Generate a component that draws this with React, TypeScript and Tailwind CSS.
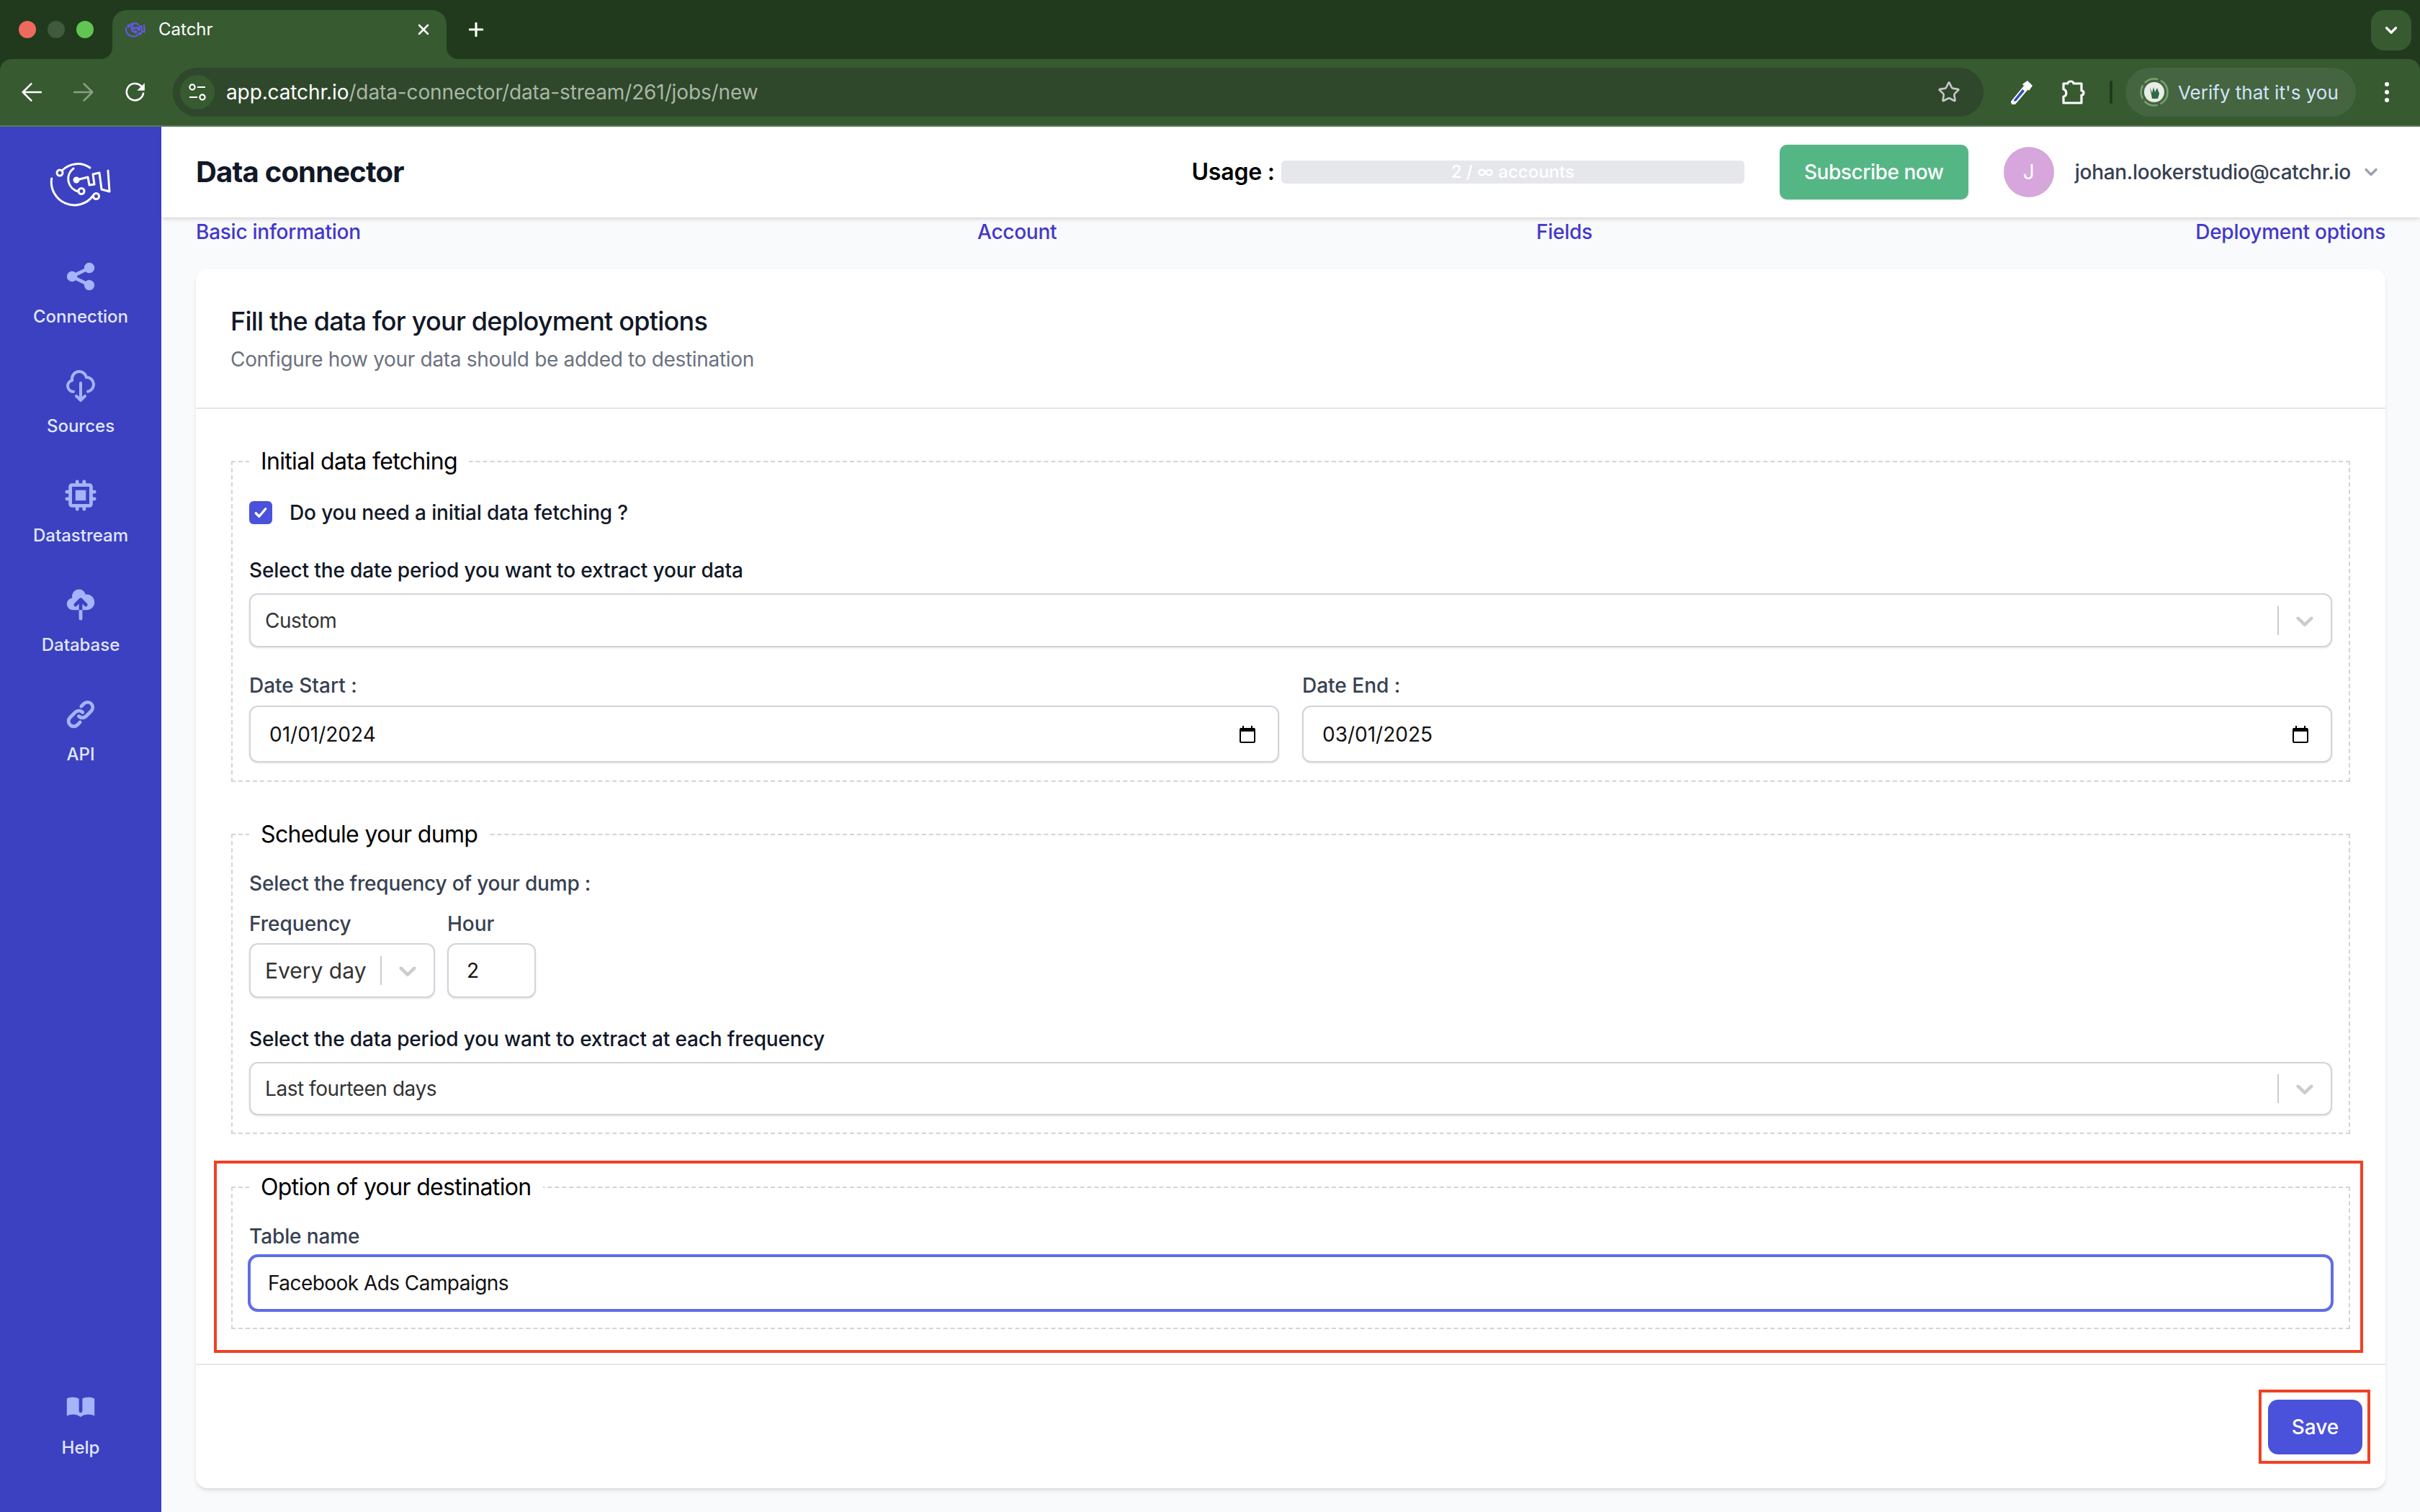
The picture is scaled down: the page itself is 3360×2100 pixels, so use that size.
import React from "react";
import { HiShare, HiOutlineCloudDownload, HiChip, HiCloudUpload, HiLink, HiBookOpen } from "react-icons/hi";
import { X, Plus, ChevronDown, Star } from "lucide-react";

function Logo({ color, className, sw = 3 }: { color: string; className: string; sw?: number }) {
  return (
    <svg viewBox="0 0 125 100" className={className} fill="none" stroke={color} strokeWidth={sw} strokeLinecap="round" strokeLinejoin="round">
      <path d="M21.7 43 A32 32 0 0 0 79 67" />
      <circle cx="83.5" cy="67.5" r="4" />
      <path d="M37 31 A30 30 0 0 1 75 28" />
      <circle cx="33" cy="35" r="4" />
      <path d="M52 29 A18 18 0 0 0 59 61" />
      <circle cx="63" cy="60.5" r="4" />
      <path d="M56 45 L72 41 L74 52 L81 51 L79 37 L88 35 L91 58 L102 61 L100 32" />
      <circle cx="56" cy="45" r="3" fill={color} />
    </svg>
  );
}

function NavItem({ icon, label }: { icon: React.ReactNode; label: string }) {
  return (
    <div className="flex flex-col items-center h-[152px]">
      <div className="h-[48px] w-[48px] text-[#a5b4fc] flex items-center justify-center">{icon}</div>
      <div className="mt-[16px] text-[24px] leading-[32px] font-medium text-[#e0e7ff]">{label}</div>
    </div>
  );
}

function Flare({ side }: { side: "l" | "r" }) {
  return side === "l" ? (
    <svg viewBox="0 0 16 16" className="absolute bottom-0 -left-[16px] w-[16px] h-[16px]">
      <path d="M16 0 V16 H0 A16 16 0 0 0 16 0Z" fill="#375a31" />
    </svg>
  ) : (
    <svg viewBox="0 0 16 16" className="absolute bottom-0 -right-[16px] w-[16px] h-[16px]">
      <path d="M0 0 V16 H16 A16 16 0 0 1 0 0Z" fill="#375a31" />
    </svg>
  );
}

function Select({ value, h, big }: { value: string; h: string; big?: boolean }) {
  return (
    <div className={`flex items-center w-full bg-white border-2 border-[#d1d5db] rounded-[12px] shadow-sm ${h}`}>
      <div className={`flex-1 pl-[20px] text-[#333333] ${big ? "text-[30px]" : "text-[28px] tracking-[-0.45px]"}`}>{value}</div>
      <div className="w-[2px] h-[40px] bg-[#cccccc]" />
      <div className="flex justify-center w-[72px]">
        <svg viewBox="0 0 20 20" className="w-[40px] h-[40px]" fill="#cccccc">
          <path d="M4.516 7.548c.436-.446 1.043-.481 1.576 0L10 11.295l3.908-3.747c.533-.481 1.141-.446 1.574 0 .436.445.408 1.197 0 1.615-.406.418-4.695 4.502-4.695 4.502a1.095 1.095 0 0 1-1.576 0S4.924 9.581 4.516 9.163s-.436-1.17 0-1.615z" />
        </svg>
      </div>
    </div>
  );
}

function CalendarIcon() {
  return (
    <svg viewBox="0 0 22 24" className="w-[22px] h-[24px] shrink-0" fill="none">
      <rect x="1" y="4" width="20" height="19" rx="1.5" stroke="#000" strokeWidth="2" />
      <rect x="1" y="3" width="20" height="5" fill="#000" />
      <rect x="4" y="0" width="2" height="4" fill="#000" />
      <rect x="16" y="0" width="2" height="4" fill="#000" />
    </svg>
  );
}

function DateField({ label, value }: { label: string; value: string }) {
  return (
    <div>
      <div className="text-[28px] leading-[40px] font-medium text-[#374151]">{label}</div>
      <div className="mt-[8px] h-[79px] flex items-center pl-[26px] pr-[31px] bg-white border-2 border-[#d1d5db] rounded-[12px] shadow-sm">
        <input readOnly value={value} className="flex-1 min-w-0 bg-transparent outline-none text-[28px] text-[#111111]" />
        <CalendarIcon />
      </div>
    </div>
  );
}

function Section({ title, className, children }: { title: string; className: string; children: React.ReactNode }) {
  return (
    <fieldset className={`border-2 border-dashed border-[#d1d5db] pl-[23px] pr-[23px] ${className}`}>
      <legend className="px-[16px] text-[32px] leading-[48px] tracking-[-0.65px] text-[#000000]">{title}</legend>
      {children}
    </fieldset>
  );
}

export default function App() {
  return (
    <div className="relative w-[3360px] h-[2100px] overflow-hidden flex flex-col bg-[#f9fafb] font-['Inter',sans-serif]">
      {/* Browser chrome */}
      <div className="h-[176px] shrink-0 bg-[#213a1d] flex flex-col">
        <div className="h-[82px] flex items-end">
          <div className="self-start mt-[29px] ml-[26px] flex gap-[16px]">
            <div className="w-[24px] h-[24px] rounded-full bg-[#ee6a5f]" />
            <div className="w-[24px] h-[24px] rounded-full bg-[#3f5a3d]" />
            <div className="w-[24px] h-[24px] rounded-full bg-[#61c554]" />
          </div>
          <div className="relative ml-[26px] w-[464px] h-[68px] bg-[#375a31] rounded-t-[20px] flex items-center pl-[12px] pr-[20px] pb-[14px]">
            <Flare side="l" />
            <Flare side="r" />
            <Logo color="#6358e6" sw={7} className="w-[40px] h-[32px] shrink-0" />
            <span className="ml-[12px] text-[24px] text-white flex-1">Catchr</span>
            <X className="w-[24px] h-[24px] text-white" strokeWidth={2.5} />
          </div>
          <Plus className="self-start mt-[26px] ml-[26px] w-[30px] h-[30px] text-white" strokeWidth={2.5} />
          <div className="self-start mt-[14px] ml-auto mr-[12px] w-[56px] h-[56px] rounded-[18px] bg-[#375a31] flex items-center justify-center">
            <ChevronDown className="w-[26px] h-[26px] text-white" strokeWidth={3} />
          </div>
        </div>
        <div className="h-[94px] bg-[#375a31] border-b-2 border-[#5c7a56] rounded-t-[16px] flex items-center">
          <svg viewBox="0 0 24 24" className="ml-[30px] w-[28px] h-[28px]" fill="none" stroke="#fff" strokeWidth="2.2" strokeLinecap="round" strokeLinejoin="round">
            <path d="M23 12H1.5M11.5 2 1.5 12l10 10" />
          </svg>
          <svg viewBox="0 0 24 24" className="ml-[44px] w-[28px] h-[28px]" fill="none" stroke="#8aa085" strokeWidth="2.2" strokeLinecap="round" strokeLinejoin="round">
            <path d="M1 12h21.5M12.5 2l10 10-10 10" />
          </svg>
          <svg viewBox="0 0 24 24" className="ml-[44px] w-[28px] h-[28px]" fill="none" stroke="#fff" strokeWidth="2.2">
            <path d="M21.5 12.5A10 10 0 1 1 18.5 4.5L22 8" />
            <path d="M23 1 23 10 14 10 Z" fill="#fff" stroke="none" />
          </svg>
          <div className="ml-[38px] w-[2514px] h-[68px] rounded-full bg-[#2f472b] flex items-center pl-[10px] pr-[32px]">
            <div className="w-[48px] h-[48px] rounded-full bg-[#375a31] flex items-center justify-center">
              <svg viewBox="0 0 26 26" className="w-[26px] h-[26px]" fill="none" stroke="#fff" strokeWidth="2.2">
                <circle cx="6" cy="6" r="3.6" />
                <path d="M13 6h11M2 20h11" />
                <circle cx="20" cy="20" r="3.6" />
              </svg>
            </div>
            <div className="ml-[16px] text-[28px] tracking-[-0.12px] flex-1 whitespace-nowrap text-[#a9b7a6]">
              <span className="text-white">app.catchr.io</span>/data-connector/data-stream/261/jobs/new
            </div>
            <Star className="w-[32px] h-[32px] text-[#c4c7c5]" strokeWidth={2} />
          </div>
          <svg viewBox="0 0 36 36" className="ml-[34px] w-[36px] h-[36px]">
            <path d="M4 31 22 9l6 5-18 21H5z" fill="#fff" />
            <path d="M8 29 20 14l3 2.5-12 14-3 0z" fill="#2f4fb5" />
            <path d="M20 7l7-5 7 7-5 7z" fill="#fff" />
          </svg>
          <svg viewBox="0 0 34 36" className="ml-[37px] w-[34px] h-[36px]" fill="none" stroke="#fff" strokeWidth="3.2" strokeLinejoin="round">
            <path d="M4 6h6c0-4 8-4 8 0h11v10c4 0 4 6 0 6v11H4v-9c5 0 5-9 0-10z" />
          </svg>
          <div className="ml-[34px] w-[4px] h-[32px] rounded-full bg-[#1f3a1b]" />
          <div className="ml-[18px] w-[320px] h-[68px] rounded-full bg-[#44653f] flex items-center pl-[20px]">
            <svg viewBox="0 0 40 40" className="w-[40px] h-[40px] shrink-0">
              <circle cx="20" cy="20" r="18.5" fill="none" stroke="#79a173" strokeWidth="2.5" strokeDasharray="20 4" />
              <circle cx="20" cy="20" r="14" fill="#e9ece7" />
              <path d="M14 13l3 8 2-8 2 7 3-6 3 8-2 7h-8z" fill="#2f6a45" />
            </svg>
            <span className="ml-[13px] text-[26px] whitespace-nowrap text-[#d3e3fd]">Verify that it's you</span>
          </div>
          <div className="ml-[40px] flex flex-col gap-[5px]">
            <div className="w-[6px] h-[6px] rounded-full bg-white" />
            <div className="w-[6px] h-[6px] rounded-full bg-white" />
            <div className="w-[6px] h-[6px] rounded-full bg-white" />
          </div>
        </div>
      </div>

      <div className="flex-1 flex min-h-0">
        {/* Sidebar */}
        <aside className="w-[224px] shrink-0 bg-[#3c41c1] flex flex-col items-center">
          <Logo color="#ffffff" className="mt-[29px] w-[125px] h-[100px]" />
          <div className="mt-[55px] flex flex-col">
            <NavItem icon={<HiShare className="w-[48px] h-[48px]" />} label="Connection" />
            <NavItem icon={<HiOutlineCloudDownload className="w-[48px] h-[48px]" />} label="Sources" />
            <NavItem icon={<HiChip className="w-[48px] h-[48px]" />} label="Datastream" />
            <NavItem icon={<HiCloudUpload className="w-[48px] h-[48px]" />} label="Database" />
            <NavItem icon={<HiLink className="w-[48px] h-[48px]" />} label="API" />
          </div>
          <div className="mt-auto mb-[17px]">
            <NavItem icon={<HiBookOpen className="w-[48px] h-[48px]" />} label="Help" />
          </div>
        </aside>

        <main className="flex-1 min-w-0 flex flex-col">
          {/* Header */}
          <header className="relative h-[126px] shrink-0 bg-white shadow-md flex items-center pl-[48px]">
            <h1 className="text-[40px] font-bold tracking-[-0.8px] text-[#111827]">Data connector</h1>
            <div className="ml-auto text-[32px] font-semibold tracking-[-0.2px] text-[#000000]">Usage :</div>
            <div className="ml-[9px] w-[643px] h-[32px] rounded-[6px] bg-[#e5e7eb] flex items-center justify-center text-[24px] font-medium text-white">
              2 / ∞ accounts
            </div>
            <button className="ml-[49px] w-[262px] h-[76px] rounded-[10px] bg-[#55b685] shadow-sm text-white text-[28px] tracking-[-0.45px] font-medium">
              Subscribe now
            </button>
            <div className="ml-[49px] w-[70px] h-[70px] rounded-full bg-[#d6a6dc] flex items-center justify-center text-[28px] text-white">J</div>
            <div className="ml-[29px] text-[28px] tracking-[-0.3px] font-medium text-[#374151]">johan.lookerstudio@catchr.io</div>
            <ChevronDown className="ml-[14px] mr-[54px] w-[28px] h-[28px] text-[#9ca3af]" strokeWidth={3} />
          </header>

          <div className="flex-1 min-h-0 px-[48px]">
            {/* Steps */}
            <div className="h-[72px] flex text-[28px] leading-[40px] font-medium tracking-[-0.25px] text-[#4338ca]">
              <div className="w-[1085px]">Basic information</div>
              <div className="w-[776px]">Account</div>
              <div className="flex-1">Fields</div>
              <div>Deployment options</div>
            </div>

            {/* Card */}
            <div className="h-[1693px] bg-white rounded-[16px] shadow-md flex flex-col">
              <div className="h-[194px] shrink-0 border-b-2 border-[#e5e7eb] px-[48px] pt-[44px]">
                <h2 className="text-[36px] leading-[56px] font-medium tracking-[-0.78px] text-[#111827]">Fill the data for your deployment options</h2>
                <p className="mt-[5px] text-[28px] leading-[40px] tracking-[-0.31px] text-[#6b7280]">Configure how your data should be added to destination</p>
              </div>

              <div className="px-[49px] pb-[48px] border-b-2 border-[#e5e7eb] flex-1">
                <Section title="Initial data fetching" className="mt-[49px] pb-[25px]">
                  <div className="mt-[27px] h-[40px] flex items-center">
                    <div className="w-[32px] h-[32px] rounded-[6px] bg-[#4a51db] flex items-center justify-center">
                      <svg viewBox="0 0 16 16" className="w-[24px] h-[24px]" fill="none" stroke="#fff" strokeWidth="2.2" strokeLinecap="round" strokeLinejoin="round">
                        <path d="M3.5 8.5 6.5 11.5 12.5 4.5" />
                      </svg>
                    </div>
                    <span className="ml-[24px] text-[28px] font-medium tracking-[-0.15px] text-[#111827]">Do you need a initial data fetching ?</span>
                  </div>
                  <div className="mt-[40px] text-[28px] leading-[40px] font-medium tracking-[-0.13px] text-[#111827]">Select the date period you want to extract your data</div>
                  <div className="mt-[12px]">
                    <Select value="Custom" h="h-[75px]" />
                  </div>
                  <div className="mt-[33px] grid grid-cols-2 gap-[32px]">
                    <DateField label="Date Start :" value="01/01/2024" />
                    <DateField label="Date End :" value="03/01/2025" />
                  </div>
                </Section>

                <Section title="Schedule your dump" className="mt-[49px] pb-[24px]">
                  <div className="mt-[24px] text-[28px] leading-[40px] font-medium tracking-[-0.18px] text-[#374151]">Select the frequency of your dump :</div>
                  <div className="mt-[16px] flex gap-[17px]">
                    <div className="w-[258px]">
                      <div className="text-[28px] leading-[40px] font-medium text-[#374151]">Frequency</div>
                      <div className="mt-[7px]">
                        <Select value="Every day" h="h-[76px]" big />
                      </div>
                    </div>
                    <div className="w-[123px]">
                      <div className="text-[28px] leading-[40px] font-medium text-[#374151]">Hour</div>
                      <input
                        readOnly
                        value="2"
                        className="mt-[7px] w-full h-[76px] pl-[25px] bg-white border-2 border-[#d1d5db] rounded-[12px] shadow-sm outline-none text-[28px] text-[#111111]"
                      />
                    </div>
                  </div>
                  <div className="mt-[37px] text-[28px] leading-[40px] font-medium tracking-[-0.16px] text-[#111827]">Select the data period you want to extract at each frequency</div>
                  <div className="mt-[12px]">
                    <Select value="Last fourteen days" h="h-[74px]" />
                  </div>
                </Section>

                <Section title="Option of your destination" className="mt-[50px] pb-[22px]">
                  <div className="mt-[24px] text-[28px] leading-[40px] font-medium tracking-[-0.1px] text-[#374151]">Table name</div>
                  <input
                    readOnly
                    value="Facebook Ads Campaigns"
                    className="mt-[5px] -mx-[2px] w-[calc(100%+4px)] h-[80px] pl-[24px] bg-white border-4 border-[#5f6ee5] rounded-[14px] outline-none text-[28px] tracking-[-0.55px] text-[#111111]"
                  />
                </Section>
              </div>

              <div className="shrink-0 flex justify-end pt-[48px] pb-[47px] pr-[32px]">
                <button className="w-[131px] h-[76px] rounded-[14px] bg-[#4a51db] text-white text-[28px] font-medium">Save</button>
              </div>
            </div>
          </div>
        </main>
      </div>

      {/* Annotation rectangles */}
      <div className="absolute left-[297px] top-[1612px] w-[2984px] h-[267px] border-4 border-[#f04124] pointer-events-none" />
      <div className="absolute left-[3136px] top-[1930px] w-[155px] h-[103px] border-4 border-[#f04124] pointer-events-none" />
    </div>
  );
}
